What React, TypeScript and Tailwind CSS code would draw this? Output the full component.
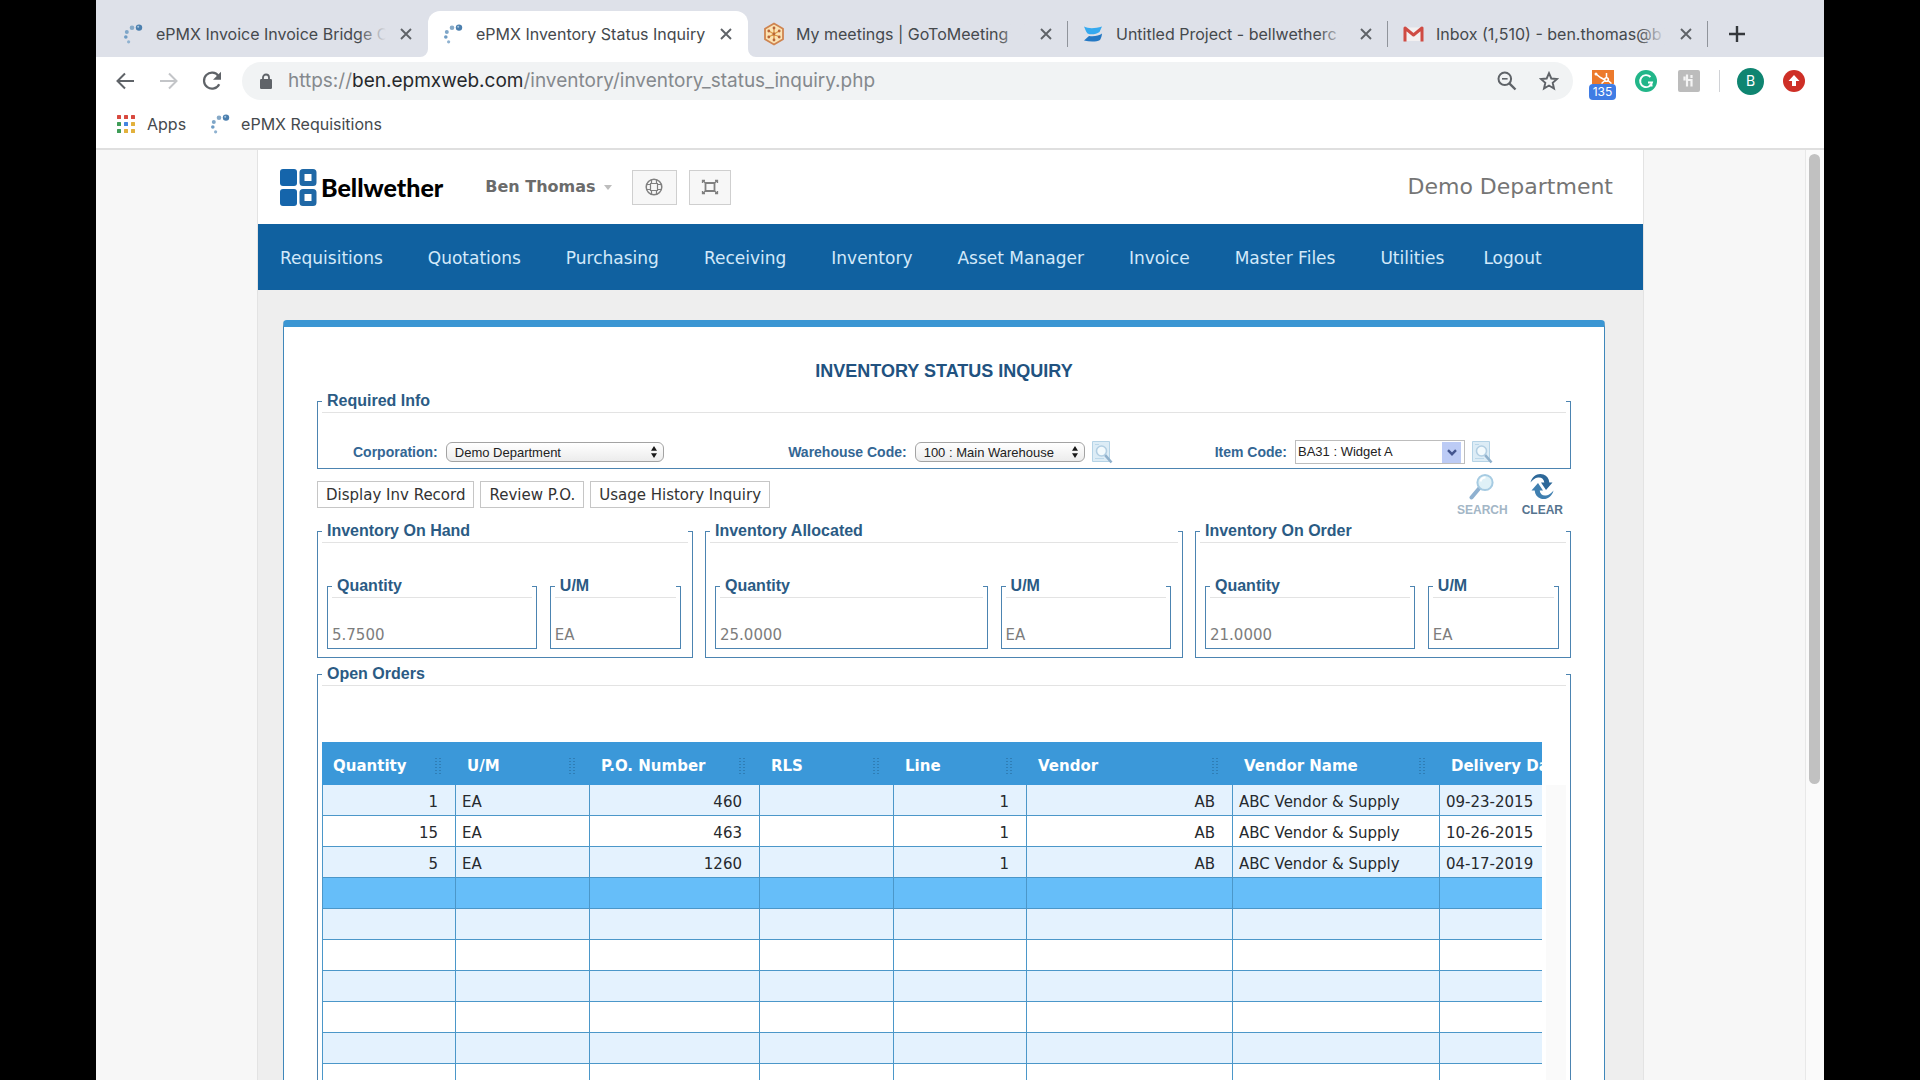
import type { ReactNode } from "react";

/* ---------- icons ---------- */

function EpmxIcon() {
  return (
    <svg viewBox="0 0 20 20" className="size-5 shrink-0" aria-hidden="true">
      <circle cx="16" cy="3.6" r="3.2" fill="#4b7fae" />
      <circle cx="15.2" cy="2.8" r="1" fill="#a9c8e2" />
      <circle cx="9" cy="3.8" r="2.3" fill="#86a9c7" />
      <circle cx="3.8" cy="8" r="2" fill="#7fa6c8" />
      <circle cx="2.8" cy="13" r="1.8" fill="#6f9cc4" />
      <circle cx="5.6" cy="17.8" r="1.6" fill="#8fb2d0" />
    </svg>
  );
}

function GoToIcon() {
  return (
    <svg viewBox="0 0 22 24" className="h-6 w-[22px] shrink-0" aria-hidden="true">
      <path d="M11 1.5 20 6.7v10.6L11 22.5 2 17.3V6.7z" fill="#fbe3b4" stroke="#cf8450" strokeWidth="1.8" strokeLinejoin="round" />
      <path d="M11 6v12M5.8 9l10.4 6M16.2 9 5.8 15" stroke="#dc9a4a" strokeWidth="1.4" strokeLinecap="round" />
      <g fill="#b9653a">
        <circle cx="11" cy="6" r="1.4" />
        <circle cx="11" cy="18" r="1.4" />
        <circle cx="5.8" cy="9" r="1.4" />
        <circle cx="16.2" cy="15" r="1.4" />
        <circle cx="16.2" cy="9" r="1.4" />
        <circle cx="5.8" cy="15" r="1.4" />
        <circle cx="11" cy="12" r="1.4" />
      </g>
    </svg>
  );
}

function SwooshIcon() {
  return (
    <svg viewBox="0 0 20 18" className="h-[18px] w-5 shrink-0" aria-hidden="true">
      <path d="M1 1.5C6 4 12 3.500 19 1.500L16.500 7C13 9.500 8 10 4.500 8.500 3 6.500 2 4 1 1.500z" fill="#35a9ef" />
      <path d="M19 8.500c-3 2.500-8 3-13 2.500L1 15.500c6 1.500 12.500 1.500 16-.5 1.200-1.800 1.800-4 2-6.500z" fill="#2478c4" />
    </svg>
  );
}

function GmailIcon() {
  return (
    <svg viewBox="0 0 21 16" className="h-4 w-[21px] shrink-0" aria-hidden="true">
      <path d="M3 1.500h15V15H3z" fill="#f3f0f1" />
      <path d="M2 15.500V2l8.500 7L19 2v13.500" fill="none" stroke="#cf4b43" strokeWidth="3" strokeLinejoin="round" />
    </svg>
  );
}

function CrossIcon() {
  return (
    <svg viewBox="0 0 12 12" className="size-3" aria-hidden="true">
      <path d="M1 1l10 10M11 1 1 11" stroke="#5f6368" strokeWidth="1.900" fill="none" />
    </svg>
  );
}

function ArrowIcon({ color, forward }: { color: string; forward?: boolean }) {
  return (
    <svg viewBox="0 0 18 18" className="size-[18px]" aria-hidden="true">
      <path d={forward ? "M0 9h16M9 1.500 16.500 9 9 16.500" : "M18 9H2M9 1.500 1.500 9 9 16.500"} fill="none" stroke={color} strokeWidth="2" />
    </svg>
  );
}

function ReloadIcon() {
  return (
    <svg viewBox="0 0 20 20" className="size-5" aria-hidden="true">
      <path d="M17.200 13.200A8 8 0 1 1 16.500 5" fill="none" stroke="#5f6368" strokeWidth="2.200" />
      <path d="M19 .8v8h-8z" fill="#5f6368" />
    </svg>
  );
}

function LockIcon() {
  return (
    <svg viewBox="0 0 12 16" className="h-4 w-3 shrink-0" aria-hidden="true">
      <path d="M3 7V4.500a3 3 0 0 1 6 0V7" fill="none" stroke="#5f6368" strokeWidth="1.800" />
      <rect x="0" y="6" width="12" height="10" rx="1.200" fill="#5f6368" />
    </svg>
  );
}

function AppsIcon() {
  const colors = ["#d8493f", "#d8493f", "#d8493f", "#3f9d57", "#4285e0", "#e2b13c", "#3f9d57", "#e2b13c", "#e2b13c"];
  return (
    <svg viewBox="0 0 18 18" className="size-[18px]" aria-hidden="true">
      {colors.map((c, i) => (
        <rect key={i} x={(i % 3) * 7} y={Math.floor(i / 3) * 7} width="4" height="4" rx="0.500" fill={c} />
      ))}
    </svg>
  );
}

function PageSearchIcon() {
  return (
    <svg viewBox="0 0 22 24" className="h-6 w-[22px]" aria-hidden="true">
      <path d="M1.500 1.500h17v20h-17z" fill="#dcecf6" stroke="#b5d3e6" />
      <path d="M4 18.500h9M4 4.500h4" stroke="#bcd8ea" />
      <circle cx="10.500" cy="11" r="5" fill="#f3fafd" stroke="#b3cfe3" strokeWidth="1.600" />
      <path d="M14.200 15.200 20.500 22.500" stroke="#8fb0cc" strokeWidth="2.600" />
    </svg>
  );
}

/* ---------- browser chrome ---------- */

function Tab({ icon, title, active, divider }: { icon: ReactNode; title: string; active?: boolean; divider?: boolean }) {
  return (
    <div className={active ? "relative mt-[11px] flex h-[46px] w-80 items-center rounded-t-xl bg-white pl-[15px] pr-4" : "relative mt-[11px] flex h-[46px] w-80 items-center pl-[15px] pr-4"}>
      {active && (
        <>
          <svg viewBox="0 0 8 8" className="absolute -left-2 bottom-0 size-2" aria-hidden="true">
            <path d="M8 0v8H0a8 8 0 0 0 8-8z" fill="#fff" />
          </svg>
          <svg viewBox="0 0 8 8" className="absolute -right-2 bottom-0 size-2" aria-hidden="true">
            <path d="M0 0v8h8a8 8 0 0 1-8-8z" fill="#fff" />
          </svg>
        </>
      )}
      <div className="flex w-[33px] shrink-0 items-center">{icon}</div>
      <div className="relative mr-3.5 min-w-0 flex-1 overflow-hidden whitespace-nowrap text-base leading-6 text-[#45494d]">
        {title}
        {!active && <div className="absolute inset-y-0 right-0 w-7 bg-gradient-to-r from-transparent to-[#dee1e9]" />}
      </div>
      <button type="button" aria-label={"Close " + title} className="shrink-0">
        <CrossIcon />
      </button>
      {divider && <div className="absolute right-0 top-2.5 h-[26px] w-px bg-[#90949b]" />}
    </div>
  );
}

function BrowserChrome() {
  return (
    <header className="shrink-0 border-b-2 border-[#dfdfdf] bg-white font-['Inter',sans-serif]">
      <div className="flex h-[57px] bg-[#dee1e9] pl-3">
        <Tab icon={<EpmxIcon />} title="ePMX Invoice Invoice Bridge O" />
        <Tab icon={<EpmxIcon />} title="ePMX Inventory Status Inquiry" active />
        <Tab icon={<GoToIcon />} title="My meetings | GoToMeeting" divider />
        <Tab icon={<SwooshIcon />} title="Untitled Project - bellwetherc" divider />
        <Tab icon={<GmailIcon />} title="Inbox (1,510) - ben.thomas@b" divider />
        <button type="button" aria-label="New tab" className="ml-[21px] pt-[11px]">
          <svg viewBox="0 0 16 16" className="size-4" aria-hidden="true">
            <path d="M8 0v16M0 8h16" stroke="#35383c" strokeWidth="2.400" />
          </svg>
        </button>
      </div>

      <div className="flex items-center pb-[3px] pl-5 pr-[19px] pt-[5px]">
        <button type="button" aria-label="Back"><ArrowIcon color="#5f6368" /></button>
        <button type="button" aria-label="Forward" className="ml-[26px]"><ArrowIcon color="#c3c5c8" forward /></button>
        <button type="button" aria-label="Reload" className="ml-6"><ReloadIcon /></button>
        <div className="ml-5 flex h-[38px] flex-1 items-center rounded-full bg-[#f1f3f4] pl-[18px] pr-3.5">
          <LockIcon />
          <p className="ml-4 flex-1 text-[19px] leading-7 text-[#85898d]">
            https://<span className="text-[#26282b]">ben.epmxweb.com</span>/inventory/inventory_status_inquiry.php
          </p>
          <button type="button" aria-label="Zoom">
            <svg viewBox="0 0 20 20" className="size-5" aria-hidden="true">
              <circle cx="7.800" cy="7.800" r="6.300" fill="none" stroke="#5f6368" strokeWidth="2" />
              <path d="M5 7.800h5.600" stroke="#5f6368" strokeWidth="1.600" />
              <path d="M12.300 12.300 18.500 18.500" stroke="#5f6368" strokeWidth="2.400" />
            </svg>
          </button>
          <button type="button" aria-label="Bookmark this page" className="ml-[22px]">
            <svg viewBox="0 0 20 20" className="size-5" aria-hidden="true">
              <path d="M10 2.200l2.300 5.300 5.800.5-4.400 3.800 1.300 5.700-5-3-5 3 1.300-5.700L1.900 8l5.800-.5z" fill="none" stroke="#5f6368" strokeWidth="1.900" />
            </svg>
          </button>
        </div>
        <div className="ml-4 flex w-[27px] flex-col items-center pt-2">
          <svg viewBox="0 0 22 14" className="h-3.5 w-[22px]" aria-hidden="true">
            <path d="M0 0h22v14H0z" fill="#ec7a2c" />
            <path d="M4 4l4.500 3.500L13 10M14.500 3v5M13 10.500l-3.500 3M16 10.500l3.500 3" stroke="#fff" strokeWidth="1.500" fill="none" />
            <circle cx="4" cy="4" r="1.500" fill="#fff" />
            <circle cx="14.500" cy="9.500" r="2.600" fill="#fff" />
            <circle cx="14.500" cy="9.500" r="1" fill="#ec7a2c" />
          </svg>
          <span className="flex h-4 w-full items-center justify-center rounded-sm bg-[#3f7ce4] text-xs leading-4 text-white">135</span>
        </div>
        <svg viewBox="0 0 22 22" className="ml-[19px] size-[22px]" aria-hidden="true">
          <circle cx="11" cy="11" r="11" fill="#22b689" />
          <path d="M15.500 7A6 6 0 1 0 17 12.500h-4M14 15.500h3.500" fill="none" stroke="#fff" strokeWidth="1.900" />
        </svg>
        <svg viewBox="0 0 22 22" className="ml-[21px] size-[22px]" aria-hidden="true">
          <rect width="22" height="22" rx="2" fill="#bcbcbc" />
          <path d="M9 4.500v12M9 10h4.500v6.500M13.500 5v3M6.500 6.500v4" fill="none" stroke="#f4f4f4" strokeWidth="2.200" />
        </svg>
        <div className="ml-[19px] h-[22px] w-px bg-[#d0d2d6]" />
        <div className="ml-[17px] flex size-[27px] items-center justify-center rounded-full bg-[#0f8571] text-sm text-white">B</div>
        <svg viewBox="0 0 22 22" className="ml-[19px] size-[22px]" aria-hidden="true">
          <circle cx="11" cy="11" r="11" fill="#ce2f26" />
          <path d="M11 5l5.500 6H13v5H9v-5H5.500z" fill="#fff" />
        </svg>
      </div>

      <nav aria-label="Bookmarks" className="flex h-[45px] items-center pb-1 pl-[21px] text-base leading-6 text-[#45494d]">
        <a href="#apps" className="flex items-center gap-3"><AppsIcon />Apps</a>
        <a href="#requisitions" className="ml-6 flex items-center gap-[11px]"><EpmxIcon />ePMX Requisitions</a>
      </nav>
    </header>
  );
}

/* ---------- page ---------- */

const menu = ["Requisitions", "Quotations", "Purchasing", "Receiving", "Inventory", "Asset Manager", "Invoice", "Master Files", "Utilities", "Logout"];

function SiteHeader() {
  return (
    <div className="flex h-[74px] items-center bg-white pl-[22px] pr-[30px]">
      <a href="#home" aria-label="Bellwether home" className="flex items-center">
        <svg viewBox="0 0 37 37" className="size-[37px]" aria-hidden="true">
          <rect x="0" y="0" width="17" height="17" rx="3" fill="#1565ab" />
          <rect x="0" y="20" width="17" height="17" rx="3" fill="#1565ab" />
          <rect x="22" y="2.500" width="12" height="12" rx="1" fill="#fff" stroke="#1f68a6" strokeWidth="5" strokeLinejoin="round" />
          <rect x="22" y="22.500" width="12" height="12" rx="1" fill="#fff" stroke="#1f68a6" strokeWidth="5" strokeLinejoin="round" />
        </svg>
        <span className="ml-1 font-['Lato',sans-serif] text-[25px] font-black leading-8 text-black">Bellwether</span>
      </a>
      <button type="button" className="ml-[42px] flex items-center gap-2 text-base font-bold text-[#6b6b6b]">
        Ben Thomas
        <svg viewBox="0 0 8 5" className="h-[5px] w-2" aria-hidden="true"><path d="M0 0h8L4 5z" fill="#bdbdbd" /></svg>
      </button>
      <button type="button" aria-label="Help" className="ml-5 flex h-[35px] w-[45px] items-center justify-center border border-[#cfcfcf] bg-[#f7f7f7]">
        <svg viewBox="0 0 18 18" className="size-[18px]" fill="none" stroke="#808080" aria-hidden="true">
          <circle cx="9" cy="9" r="7.800" strokeWidth="1.500" />
          <path d="M5.500 5.500h7v7h-7zM6.500 1.500v4M11.500 1.500v4M6.500 12.500v4M11.500 12.500v4M1.500 6.500h4M1.500 11.500h4M12.500 6.500h4M12.500 11.500h4" strokeWidth="1.200" />
        </svg>
      </button>
      <button type="button" aria-label="Full screen" className="ml-3 flex h-[35px] w-[42px] items-center justify-center border border-[#cfcfcf] bg-[#f7f7f7]">
        <svg viewBox="0 0 18 16" className="h-4 w-[18px]" fill="none" stroke="#808080" strokeWidth="1.300" aria-hidden="true">
          <path d="M4.500 4h9v8h-9z" strokeWidth="1.800" />
          <path d="M1.500 4V1.500H4M16.500 4V1.500H14M1.500 12v2.500H4M16.500 12v2.500H14M1.500 1.500l3 2.500M16.500 1.500l-3 2.500M1.500 14.500l3-2.500M16.500 14.500l-3-2.500" />
        </svg>
      </button>
      <p className="ml-auto text-[22px] leading-8 text-[#757575]">Demo Department</p>
    </div>
  );
}

function Panel({ title, className, children }: { title: string; className?: string; children: ReactNode }) {
  return (
    <fieldset className={"min-w-0 border border-[#4c84b1] px-1 " + (className ?? "")}>
      <legend className="h-6 w-full border-b border-[#e3e3e3] pl-[5px] font-['Liberation_Sans',sans-serif] text-base font-bold leading-6 text-[#2b5b84]">
        {title}
      </legend>
      {children}
    </fieldset>
  );
}

function NativeSelect({ id, className, value }: { id: string; className: string; value: string }) {
  return (
    <div className={"relative ml-2 " + className}>
      <select id={id} className="block h-5 w-full appearance-none rounded-md border border-[#a3a3a3] bg-gradient-to-b from-white to-[#ececec] pl-2 pr-5 font-['Liberation_Sans',sans-serif] text-[13px] leading-[17px] text-[#222]">
        <option>{value}</option>
      </select>
      <svg viewBox="0 0 6 12" className="pointer-events-none absolute right-[7px] top-1 h-3 w-1.5" aria-hidden="true">
        <path d="M3 0l3 4.800H0zM3 12l3-4.800H0z" fill="#1a1a1a" />
      </svg>
    </div>
  );
}

const labelClass = "font-['Liberation_Sans',sans-serif] text-sm font-bold leading-6 text-[#336694]";

function RequiredInfo() {
  return (
    <Panel title="Required Info" className="mt-1.5">
      <div className="mb-1 mt-[27px] flex items-center pl-[31px] pr-[73px]">
        <div className="flex items-center">
          <label htmlFor="corporation" className={labelClass}>Corporation:</label>
          <NativeSelect id="corporation" className="w-[218px]" value="Demo Department" />
        </div>
        <div className="ml-auto flex items-center">
          <label htmlFor="warehouse" className={labelClass}>Warehouse Code:</label>
          <NativeSelect id="warehouse" className="w-[170px]" value="100 : Main Warehouse" />
          <button type="button" aria-label="Look up warehouse" className="ml-1.5"><PageSearchIcon /></button>
        </div>
        <div className="ml-[102px] flex items-center">
          <label htmlFor="item" className={labelClass}>Item Code:</label>
          <div className="ml-2 flex h-6 w-[170px] items-center border border-[#bdbdbd] bg-white pr-[3px]">
            <input id="item" defaultValue="BA31 : Widget A" className="min-w-0 flex-1 pl-0.5 font-['Liberation_Sans',sans-serif] text-[13px] text-[#222] outline-none" />
            <button type="button" aria-label="Show items" className="flex h-[21px] w-[19px] items-center justify-center bg-[#bccbf5]">
              <svg viewBox="0 0 10 7" className="h-[7px] w-2.5" aria-hidden="true"><path d="M1 1.200l4 4 4-4" fill="none" stroke="#43558f" strokeWidth="2.400" /></svg>
            </button>
          </div>
          <button type="button" aria-label="Look up item" className="ml-1.5"><PageSearchIcon /></button>
        </div>
      </div>
    </Panel>
  );
}

function Actions() {
  return (
    <div className="mt-[5px] flex h-[41px] items-center">
      <div className="flex gap-1.5">
        {["Display Inv Record", "Review P.O.", "Usage History Inquiry"].map((t) => (
          <button key={t} type="button" className="h-[27px] whitespace-nowrap border border-[#c6c6c6] bg-white px-2 text-[15px] leading-[22px] text-[#333]">{t}</button>
        ))}
      </div>
      <div className="ml-auto flex gap-3.5 pr-2 font-['Liberation_Sans',sans-serif] text-xs font-bold leading-3">
        <button type="button" className="flex flex-col items-center gap-1 text-[#a3b6c6]">
          <svg viewBox="0 0 26 27" className="h-[27px] w-[26px]" aria-hidden="true">
            <path d="M10.500 15 2.500 24.500" stroke="#8fb1d0" strokeWidth="4" strokeLinecap="round" />
            <circle cx="16" cy="9.500" r="7.600" fill="#dff1f7" stroke="#a6cbe2" strokeWidth="2" />
            <path d="M11.500 8.500a5 5 0 0 1 5-4" fill="none" stroke="#fff" strokeWidth="2" />
          </svg>
          SEARCH
        </button>
        <button type="button" className="flex flex-col items-center gap-1 text-[#56748f]">
          <svg viewBox="0 0 26 27" className="h-[27px] w-[26px]" aria-hidden="true">
            <path d="M1.500 9.500C3 3 9 -.5 14.500 1.500c3.500 1.300 5.500 4 5.800 8h3.200L17 17l-5-7.500h3.300c-.3-3.500-3-5.500-6.300-5-3 .4-5.500 2.300-7.500 5z" fill="#2d6899" />
            <path d="M24.500 17.500C23 24 17 27.500 11.500 25.500c-3.500-1.300-5.500-4-5.800-8H2.500L9 10l5 7.500h-3.300c.3 3.500 3 5.500 6.300 5 3-.4 5.500-2.300 7.500-5z" fill="#3f7fb0" />
          </svg>
          CLEAR
        </button>
      </div>
    </div>
  );
}

function Stock({ title, quantity }: { title: string; quantity: string }) {
  const valueClass = "mb-px mt-6 block h-[25px] w-full min-w-0 bg-white text-[15px] leading-6 text-[#7d7d7d] outline-none";
  return (
    <Panel title={title}>
      <div className="mb-2 mt-[31px] grid grid-cols-[8fr_5fr] gap-[13px] pl-[5px] pr-[7px]">
        <Panel title="Quantity">
          <input readOnly aria-label={title + " quantity"} value={quantity} className={valueClass} />
        </Panel>
        <Panel title="U/M">
          <input readOnly aria-label={title + " unit of measure"} value="EA" className={valueClass} />
        </Panel>
      </div>
    </Panel>
  );
}

const columns = ["Quantity", "U/M", "P.O. Number", "RLS", "Line", "Vendor", "Vendor Name", "Delivery Date"];
const rightAligned = [true, false, true, false, true, true, false, false];
const orders = [
  ["1", "EA", "460", "", "1", "AB", "ABC Vendor & Supply", "09-23-2015"],
  ["15", "EA", "463", "", "1", "AB", "ABC Vendor & Supply", "10-26-2015"],
  ["5", "EA", "1260", "", "1", "AB", "ABC Vendor & Supply", "04-17-2019"],
  ...Array.from({ length: 9 }, () => ["", "", "", "", "", "", "", ""]),
];

function Grip() {
  return (
    <svg viewBox="0 0 6 16" className="h-4 w-1.5" aria-hidden="true">
      {[0, 3, 6, 9, 12, 15].map((y) => (
        <path key={y} d={`M0 ${y}h2v1H0zM4 ${y}h2v1H4z`} fill="#2f7eb6" />
      ))}
    </svg>
  );
}

function OpenOrders() {
  return (
    <Panel title="Open Orders" className="mt-1">
      <div className="mt-14 flex">
        <div className="min-w-0 flex-1 overflow-hidden">
          <table className="w-[1325px] table-fixed border-separate border-spacing-0 text-[15px] leading-5">
            <colgroup>
              <col className="w-[134px]" />
              <col className="w-[134px]" />
              <col className="w-[170px]" />
              <col className="w-[134px]" />
              <col className="w-[133px]" />
              <col className="w-[206px]" />
              <col className="w-[207px]" />
              <col className="w-[207px]" />
            </colgroup>
            <thead>
              <tr className="h-[43px] bg-[#3b98d9] text-white">
                {columns.map((c) => (
                  <th key={c} scope="col" className="p-0 pl-[11px] pr-[15px] text-left font-bold">
                    <div className="flex items-center justify-between whitespace-nowrap pt-1">{c}<Grip /></div>
                  </th>
                ))}
              </tr>
            </thead>
            <tbody>
              {orders.map((row, r) => (
                <tr key={r} className={r === 3 ? "h-[31px] bg-[#66bef9]" : r % 2 ? "h-[31px] bg-white" : "h-[31px] bg-[#e4f2fe]"}>
                  {row.map((cell, i) => (
                    <td key={i} className={"border-b border-r border-[#4b97c9] p-0 pt-1 pl-1.5 pr-[17px] text-[#262a2e] first:border-l " + (rightAligned[i] ? "text-right" : "whitespace-nowrap")}>
                      {cell}
                    </td>
                  ))}
                </tr>
              ))}
            </tbody>
          </table>
        </div>
        <div className="ml-1 mt-[43px] w-5 bg-[#fafafa]" />
      </div>
    </Panel>
  );
}

export default function App() {
  return (
    <div className="h-screen bg-black px-24">
      <div className="flex h-full flex-col overflow-hidden bg-[#f7f7f7] font-['DejaVu_Sans',sans-serif]">
        <BrowserChrome />
        <div className="flex min-h-0 flex-1">
          <div className="min-w-0 flex-1 overflow-hidden">
            <div className="mx-auto min-h-full max-w-[1387px] border-x border-[#e3e3e3] bg-[#eeeeee]">
              <SiteHeader />
              <nav aria-label="Main" className="flex h-[66px] items-center gap-[45px] bg-[#1061a0] pl-[22px] pt-px text-[17px] leading-6 text-[#d3e9fa]">
                {menu.map((m) => (
                  <a key={m} href={"#" + m.toLowerCase().replace(" ", "-")} className="whitespace-nowrap last:-ml-1.5">{m}</a>
                ))}
              </nav>
              <main className="ml-[25px] mr-[38px] mt-[30px] rounded-t border-x border-t-[7px] border-x-[#3f87ba] border-t-[#3b96d3] bg-white px-[33px] pt-8">
                <h1 className="text-center font-['Liberation_Sans',sans-serif] text-lg font-bold leading-6 text-[#215280]">INVENTORY STATUS INQUIRY</h1>
                <RequiredInfo />
                <Actions />
                <div className="mt-1 grid grid-cols-[376fr_478fr_376fr] gap-3">
                  <Stock title="Inventory On Hand" quantity="5.7500" />
                  <Stock title="Inventory Allocated" quantity="25.0000" />
                  <Stock title="Inventory On Order" quantity="21.0000" />
                </div>
                <OpenOrders />
              </main>
            </div>
          </div>
          <div className="w-[19px] shrink-0 border-l border-[#e8e8e8] bg-[#fafafa] pl-[3px] pt-1">
            <div className="h-[68%] w-[11px] rounded-full bg-[#c1c1c1]" />
          </div>
        </div>
      </div>
    </div>
  );
}
